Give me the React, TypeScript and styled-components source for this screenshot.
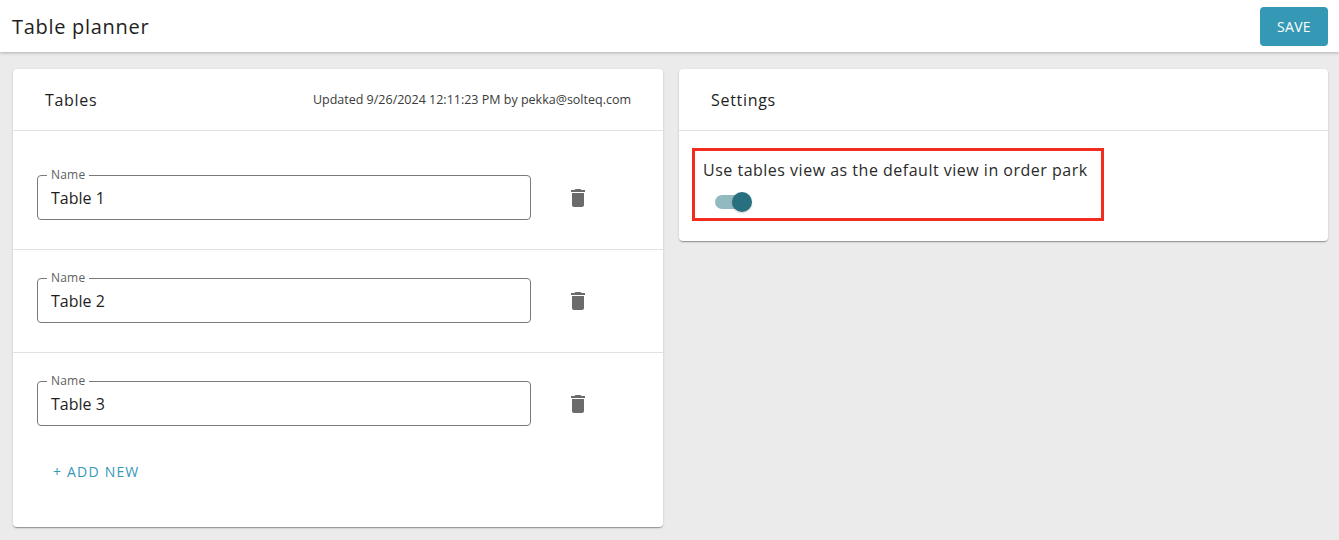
import React from "react";
import styled, { createGlobalStyle } from "styled-components";

const font = `"Open Sans", "Liberation Sans", sans-serif`;

const GlobalStyle = createGlobalStyle`
  html, body {
    margin: 0;
    padding: 0;
    background: #ebebeb;
    font-family: ${font};
    color: #212121;
  }
  * {
    box-sizing: border-box;
  }
`;

const Page = styled.div`
  min-height: 540px;
  background: #ebebeb;
`;

const TopBar = styled.header`
  display: flex;
  align-items: center;
  justify-content: space-between;
  height: 52px;
  padding: 0 11px 0 12px;
  background: #fff;
  box-shadow: 0 1px 3px rgba(0, 0, 0, 0.25);
  position: relative;
`;

const Title = styled.h1`
  margin: 0;
  font-size: 20px;
  font-weight: 500;
  letter-spacing: 0.7px;
  color: #1e1e1e;
`;

const SaveButton = styled.button`
  height: 39px;
  width: 68px;
  border: none;
  border-radius: 4px;
  background: #3599b6;
  color: #fff;
  font-family: ${font};
  font-size: 14px;
  letter-spacing: 0.3px;
  text-transform: uppercase;
  cursor: pointer;
`;

const Content = styled.main`
  display: grid;
  grid-template-columns: 650px 649px;
  gap: 16px;
  align-items: start;
  padding: 17px 11px 0 13px;
`;

const Card = styled.section`
  background: #fff;
  border-radius: 4px;
  box-shadow: 0 2px 1px -1px rgba(0, 0, 0, 0.2), 0 1px 1px 0 rgba(0, 0, 0, 0.14),
    0 1px 3px 0 rgba(0, 0, 0, 0.12);
`;

const CardHeader = styled.div`
  display: flex;
  align-items: center;
  justify-content: space-between;
  height: 62px;
  padding: 0 32px;
  border-bottom: 1px solid #e2e2e2;
`;

const CardTitle = styled.h2`
  margin: 0;
  font-size: 16px;
  font-weight: 500;
  letter-spacing: 0.7px;
  color: #1e1e1e;
`;

const Updated = styled.span`
  font-size: 12.5px;
  color: #3a3a3a;
`;

const List = styled.div`
  padding-top: 16px;
`;

const Row = styled.div<{ $last?: boolean }>`
  display: flex;
  align-items: center;
  padding: 22px 24px 29px;
  border-bottom: ${(p) => (p.$last ? "none" : "1px solid #e2e2e2")};
  height: ${(p) => (p.$last ? "102px" : "103px")};
`;

const Field = styled.fieldset`
  width: 494px;
  height: 51px;
  margin: 0;
  padding: 0 9px;
  border: 1px solid #7a7a7a;
  border-radius: 4px;
`;

const FieldLabel = styled.legend`
  padding: 0 4px;
  font-size: 12px;
  line-height: 12px;
  letter-spacing: 0.2px;
  color: #5f5f5f;
`;

const FieldInput = styled.input`
  display: block;
  width: 100%;
  height: 34px;
  border: none;
  outline: none;
  padding: 0 4px;
  background: transparent;
  font-family: ${font};
  font-size: 16px;
  color: #1e1e1e;
`;

const IconButton = styled.button`
  display: flex;
  align-items: center;
  justify-content: center;
  width: 40px;
  height: 40px;
  margin-left: 27px;
  margin-top: 7px;
  padding: 0;
  border: none;
  border-radius: 50%;
  background: transparent;
  color: #6b6b6b;
  cursor: pointer;
`;

const AddButton = styled.button`
  margin: -2px 0 38px 32px;
  height: 36px;
  padding: 0 8px;
  border: none;
  background: transparent;
  color: #3599b6;
  font-family: ${font};
  font-size: 14px;
  letter-spacing: 1.2px;
  text-transform: uppercase;
  cursor: pointer;
`;

const SettingsBody = styled.div`
  padding: 17px 13px 20px;
`;

const Highlight = styled.div`
  width: 412px;
  padding: 7px 12px 6px 8px;
  border: 3px solid #f22c1f;
`;

const OptionLabel = styled.div`
  font-size: 16px;
  line-height: 24px;
  letter-spacing: 0.5px;
  color: #2a2a2a;
`;

const SwitchTrack = styled.span`
  position: relative;
  display: block;
  width: 34px;
  height: 14px;
  margin: 13px 0 3px 12px;
  border-radius: 7px;
  background: #93b9c0;
`;

const SwitchThumb = styled.span`
  position: absolute;
  top: -3px;
  left: 17px;
  width: 20px;
  height: 20px;
  border-radius: 50%;
  background: #28707f;
  box-shadow: 0 1px 2px rgba(0, 0, 0, 0.2);
`;

const TrashIcon = () => (
  <svg width="24" height="24" viewBox="0 0 24 24" fill="currentColor">
    <path d="M6 19c0 1.1.9 2 2 2h8c1.1 0 2-.9 2-2V7H6v12zM19 4h-3.5l-1-1h-5l-1 1H5v2h14V4z" />
  </svg>
);

const tables = ["Table 1", "Table 2", "Table 3"];

const App = () => {
  return (
    <Page>
      <GlobalStyle />
      <TopBar>
        <Title>Table planner</Title>
        <SaveButton>Save</SaveButton>
      </TopBar>
      <Content>
        <Card>
          <CardHeader>
            <CardTitle>Tables</CardTitle>
            <Updated>Updated 9/26/2024 12:11:23 PM by pekka@solteq.com</Updated>
          </CardHeader>
          <List>
            {tables.map((name, i) => (
              <Row key={name} $last={i === tables.length - 1}>
                <Field>
                  <FieldLabel>Name</FieldLabel>
                  <FieldInput defaultValue={name} />
                </Field>
                <IconButton aria-label="Delete">
                  <TrashIcon />
                </IconButton>
              </Row>
            ))}
          </List>
          <AddButton>+ Add new</AddButton>
        </Card>
        <Card>
          <CardHeader>
            <CardTitle>Settings</CardTitle>
          </CardHeader>
          <SettingsBody>
            <Highlight>
              <OptionLabel>Use tables view as the default view in order park</OptionLabel>
              <SwitchTrack>
                <SwitchThumb />
              </SwitchTrack>
            </Highlight>
          </SettingsBody>
        </Card>
      </Content>
    </Page>
  );
};

export default App;
